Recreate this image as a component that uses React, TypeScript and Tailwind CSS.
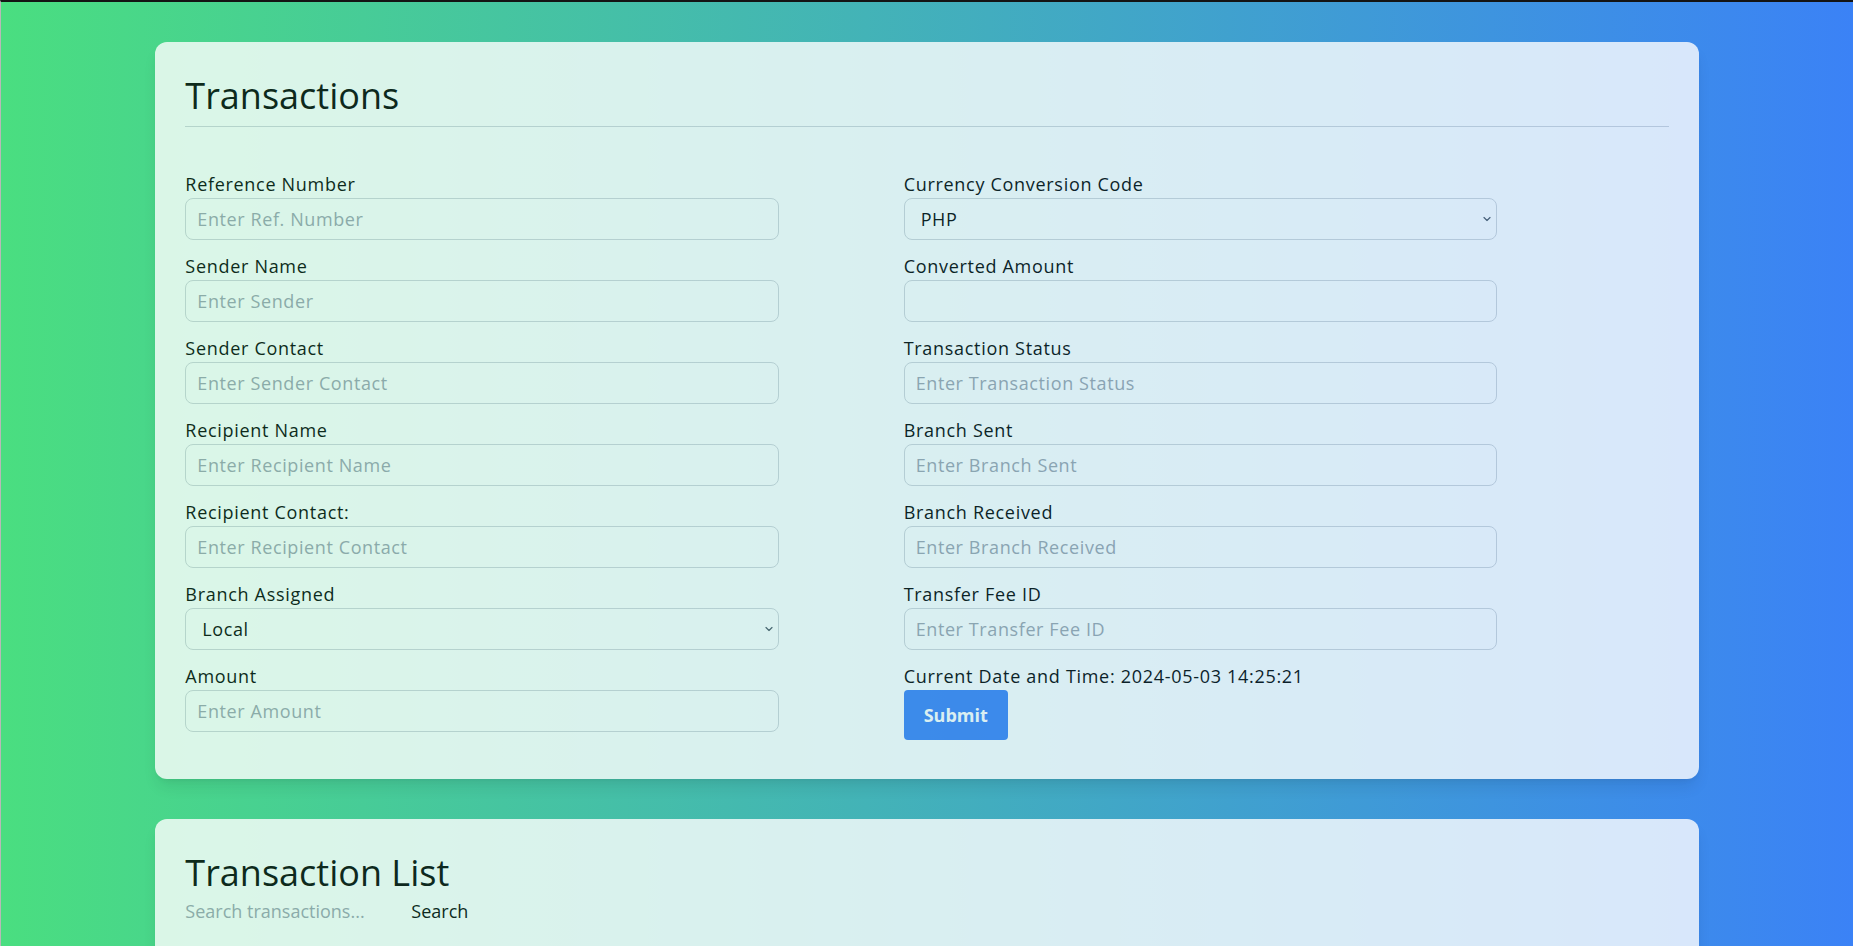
import { useState } from "react"

const Chevron = () => (
    <svg width="8" height="5" viewBox="0 0 8 5" fill="none" className="pointer-events-none absolute right-[6px] top-1/2 -translate-y-1/2">
        <path d="M1 1l3 3 3-3" stroke="#4b5563" strokeWidth="1.2" strokeLinecap="round" strokeLinejoin="round" />
    </svg>
)

const Field = ({ label, placeholder }: { label: string; placeholder?: string }) => (
    <div className="mb-3">
        <label className="block text-lg leading-7 tracking-[0.7px]">{label}</label>
        <input
            type="text"
            placeholder={placeholder}
            className="block w-full h-[42px] px-[11px] text-lg leading-7 tracking-[0.6px] bg-transparent border border-[#d1d5db] rounded-lg placeholder-[#9ca3af] outline-none"
        />
    </div>
)

const SelectField = ({ label, value, options }: { label: string; value: string; options: string[] }) => (
    <div className="mb-3">
        <label className="block text-lg leading-7 tracking-[0.7px]">{label}</label>
        <div className="relative">
            <select
                defaultValue={value}
                className="block w-full h-[42px] pl-4 pr-6 text-lg leading-7 tracking-[0.6px] bg-transparent border border-[#d1d5db] rounded-lg appearance-none outline-none"
            >
                {options.map((o) => (
                    <option key={o} value={o}>{o}</option>
                ))}
            </select>
            <Chevron />
        </div>
    </div>
)

const App = () => {
    const [search, setSearch] = useState("")

    return (
        <div className="min-h-screen bg-[linear-gradient(to_right,#4ade80,#3b82f6)] border-t-2 border-[#141414] border-l border-l-[#b8b8b8] pt-10 pb-10 text-black font-['Open_Sans',sans-serif]">
            <div className="w-5/6 mx-auto bg-white opacity-80 rounded-xl shadow-lg px-[30px] pt-[34px] pb-[35px]">
                <h1 className="text-4xl leading-10 font-medium pb-[10px] border-b border-[#d1d5db]">Transactions</h1>

                <form className="flex gap-[125px] mt-[43px]" onSubmit={(e) => e.preventDefault()}>
                    <div className="w-2/5">
                        <Field label="Reference Number" placeholder="Enter Ref. Number" />
                        <Field label="Sender Name" placeholder="Enter Sender" />
                        <Field label="Sender Contact" placeholder="Enter Sender Contact" />
                        <Field label="Recipient Name" placeholder="Enter Recipient Name" />
                        <Field label="Recipient Contact:" placeholder="Enter Recipient Contact" />
                        <SelectField label="Branch Assigned" value="Local" options={["Local", "International"]} />
                        <Field label="Amount" placeholder="Enter Amount" />
                    </div>

                    <div className="w-2/5">
                        <SelectField label="Currency Conversion Code" value="PHP" options={["PHP", "USD", "EUR", "JPY"]} />
                        <Field label="Converted Amount" />
                        <Field label="Transaction Status" placeholder="Enter Transaction Status" />
                        <Field label="Branch Sent" placeholder="Enter Branch Sent" />
                        <Field label="Branch Received" placeholder="Enter Branch Received" />
                        <Field label="Transfer Fee ID" placeholder="Enter Transfer Fee ID" />
                        <p className="text-lg leading-7 tracking-[0.7px]">Current Date and Time: 2024-05-03 14:25:21</p>
                        <button type="submit" className="h-[50px] px-5 bg-[#3b82f6] text-white text-lg font-bold rounded">
                            Submit
                        </button>
                    </div>
                </form>
            </div>

            <div className="w-5/6 mx-auto mt-10 bg-white opacity-80 rounded-xl shadow-lg px-[30px] pt-[34px] pb-8">
                <h2 className="text-4xl leading-10 font-medium">Transaction List</h2>
                <div className="flex items-center mt-1">
                    <input
                        type="text"
                        value={search}
                        onChange={(e) => setSearch(e.target.value)}
                        placeholder="Search transactions..."
                        className="w-[210px] text-lg leading-7 bg-transparent placeholder-[#9ca3af] outline-none"
                    />
                    <button className="pl-4 text-lg leading-7">Search</button>
                </div>

                <table className="w-full mt-8 text-left text-base">
                    <thead>
                        <tr className="border-b border-[#d1d5db]">
                            <th className="py-2 font-semibold">Ref. Number</th>
                            <th className="py-2 font-semibold">Sender</th>
                            <th className="py-2 font-semibold">Recipient</th>
                            <th className="py-2 font-semibold">Amount</th>
                            <th className="py-2 font-semibold">Status</th>
                        </tr>
                    </thead>
                    <tbody>
                        <tr>
                            <td className="py-2" colSpan={5}>No transactions found.</td>
                        </tr>
                    </tbody>
                </table>
            </div>
        </div>
    )
}

export default App
